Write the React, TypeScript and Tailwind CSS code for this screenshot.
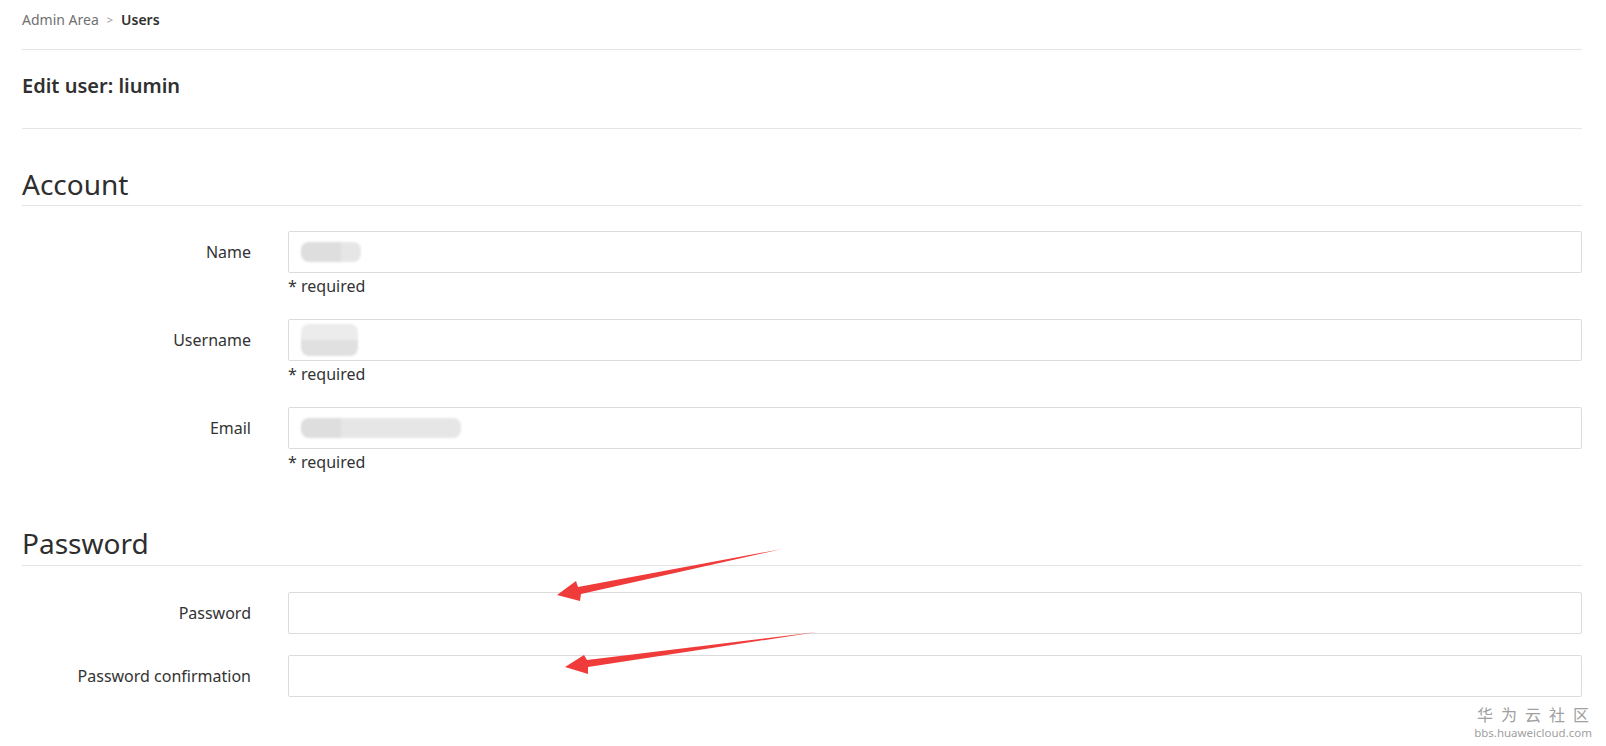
import React from "react";

const font = { fontFamily: '"Noto Sans", "Noto Sans CJK SC", sans-serif' };

const Blur = ({ w, light }: { w: number; light?: boolean }) => (
  <div className="flex h-[20px] overflow-hidden rounded-[8px] blur-[1px]">
    <div className={light ? "h-full w-[40px] bg-[#e9e9e9]" : "h-full w-[40px] bg-[#dedede]"} />
    <div className="h-full bg-[#e6e6e6]" style={{ width: w - 40 }} />
  </div>
);

const Field = ({
  label,
  required,
  children,
  last,
}: {
  label: string;
  required?: boolean;
  children?: React.ReactNode;
  last?: boolean;
}) => (
  <div className={last ? "flex" : required ? "flex mb-[22px]" : "flex mb-[21px]"}>
    <div className="w-[229px] shrink-0 h-[42px] flex items-center justify-end text-[16px] text-[#333]">
      {label}
    </div>
    <div className="ml-[37px] flex-1">
      <div className="h-[42px] border border-[#dcdcdc] rounded-[2px] bg-white flex items-center px-[12px]">
        {children}
      </div>
      {required && <div className="mt-[3px] text-[16px] leading-[21px] text-[#333]">* required</div>}
    </div>
  </div>
);

export default function App() {
  return (
    <div className="relative min-h-[746px] bg-white pl-[22px] pr-[24px]" style={font}>
      <div className="pt-[10px] pb-[19px] leading-5 text-[14px] border-b border-[#e5e5e5] flex items-center">
        <span className="text-[#707070]">Admin Area</span>
        <span className="mx-[8px] text-[#999] text-[11px]">&gt;</span>
        <span className="text-[#303030] font-semibold">Users</span>
      </div>

      <div className="pt-[23px] pb-[29px] border-b border-[#e5e5e5]">
        <h3 className="text-[20px] leading-[26px] font-semibold text-[#303030]">Edit user: liumin</h3>
      </div>

      <h2 className="mt-[37px] pb-[3px] text-[28px] leading-9 text-[#2e2e2e] border-b border-[#e5e5e5]">
        Account
      </h2>
      <div className="mt-[25px]">
        <Field label="Name" required>
          <Blur w={60} />
        </Field>
        <Field label="Username" required>
          <div className="h-[32px] w-[57px] overflow-hidden rounded-[8px] blur-[1px] flex flex-col">
            <div className="h-1/2 bg-[#ececec]" />
            <div className="h-1/2 bg-[#e0e0e0]" />
          </div>
        </Field>
        <Field label="Email" required>
          <Blur w={160} />
        </Field>
      </div>

      <h2 className="mt-[52px] pb-[4px] text-[28px] leading-9 text-[#2e2e2e] border-b border-[#e5e5e5]">
        Password
      </h2>
      <div className="mt-[26px] pb-[40px]">
        <Field label="Password" />
        <Field label="Password confirmation" last />
      </div>

      <svg className="absolute left-0 top-0 pointer-events-none" width="1606" height="746">
        <polygon points="782,549 578,587 576,581 557,595 580,601 581,594" fill="#f03b3b" />
        <polygon points="817,632 587,660 584,655 565,667 588,674 588,667" fill="#f03b3b" />
      </svg>

      <div className="absolute right-[14px] bottom-[8px] text-[#a0a0a0] leading-none flex flex-col items-center">
        <div className="text-[16px] tracking-[8px] mr-[-8px]">华为云社区</div>
        <div className="text-[11.5px] mt-[4px]">bbs.huaweicloud.com</div>
      </div>
    </div>
  );
}
